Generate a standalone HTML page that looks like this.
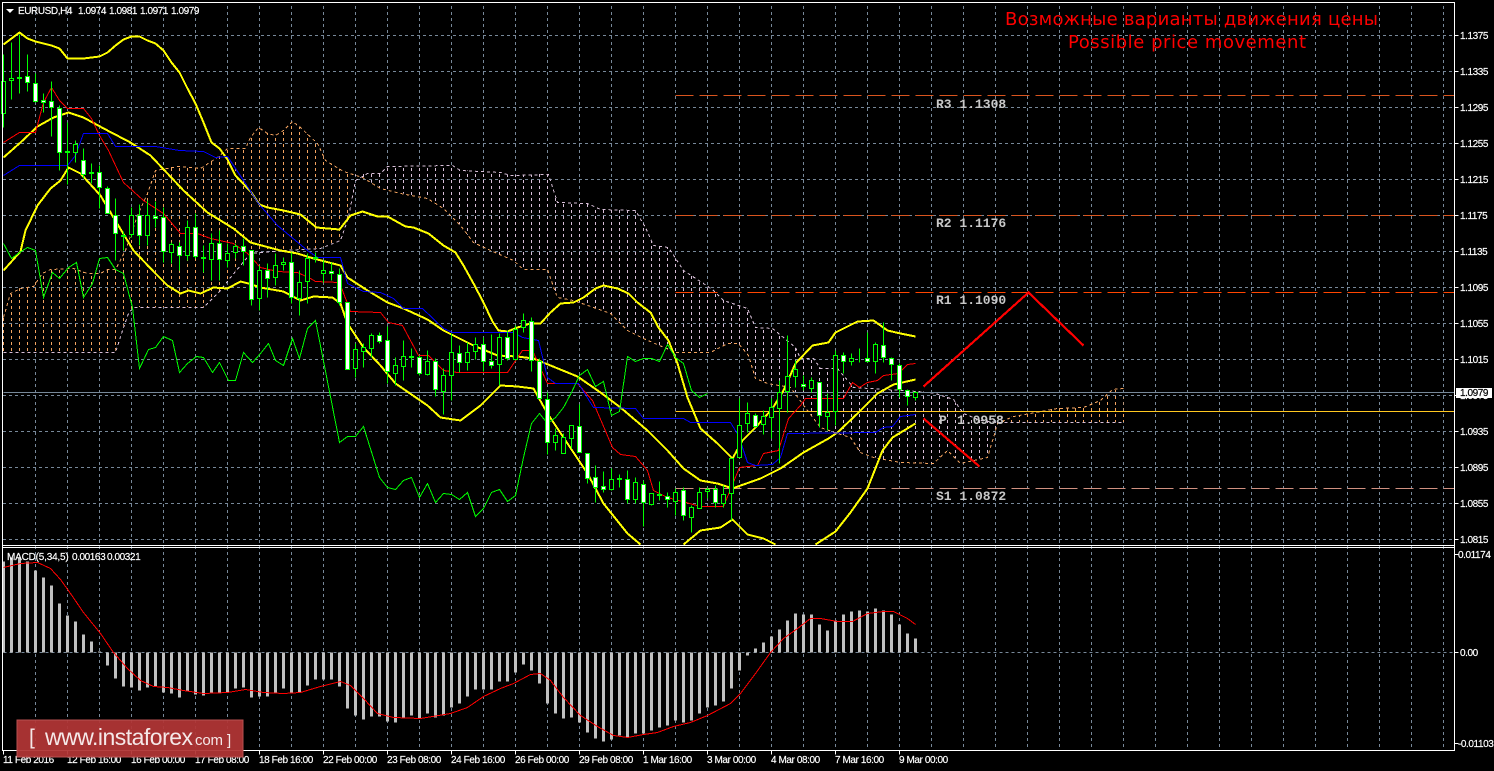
<!DOCTYPE html>
<html><head><meta charset="utf-8"><title>EURUSD H4</title>
<style>
html,body{margin:0;padding:0;background:#000;width:1494px;height:771px;overflow:hidden}
svg{display:block}
text{font-family:"Liberation Sans",sans-serif;font-size:10px;letter-spacing:-.42px;fill:#fff;stroke:#fff;stroke-width:.18px}
.p{font-family:"Liberation Mono",monospace;font-weight:bold;font-size:13px;letter-spacing:0;fill:#c8c8c8;stroke:none}
.t{font-family:"DejaVu Sans","Liberation Sans",sans-serif;font-size:18px;letter-spacing:0;fill:#f00;stroke:none}
.b{letter-spacing:0;fill:#f5e8e8;stroke:none}
.l{fill:none;shape-rendering:crispEdges}
</style></head><body>
<svg width="1494" height="771" viewBox="0 0 1494 771" xmlns="http://www.w3.org/2000/svg">
<defs>
<pattern id="gv" x="3" y="0" width="32" height="6" patternUnits="userSpaceOnUse"><rect width="1" height="3" fill="#778899" shape-rendering="crispEdges"/></pattern>
<pattern id="gh" x="3" y="35" width="6" height="36" patternUnits="userSpaceOnUse"><rect width="3" height="1" fill="#778899" shape-rendering="crispEdges"/></pattern>
<pattern id="co" x="3" y="0" width="8" height="6" patternUnits="userSpaceOnUse"><rect width="1" height="3" fill="#F4A460" shape-rendering="crispEdges"/></pattern>
<pattern id="ct" x="3" y="0" width="8" height="6" patternUnits="userSpaceOnUse"><rect width="1" height="3" fill="#D8BFD8" shape-rendering="crispEdges"/></pattern>
</defs>
<rect width="1494" height="771" fill="#000"/>
<rect x="4" y="3" width="1450" height="747" fill="url(#gv)" shape-rendering="crispEdges"/>
<rect x="3" y="3" width="1451" height="542" fill="url(#gh)" shape-rendering="crispEdges"/>
<polygon fill="url(#co)" shape-rendering="crispEdges" points="3,317 10,293 20,288 33,286 42,273 50,269 73,268 87,273 100,273 107,269 115,269 125,250 137,215 147,193 155,170 178,166 200,168 217,157 227,148 245,148 250,137 258,127 267,133 275,135 283,130 292,121 300,127 317,143 325,160 343,171 352,175 355,180 348,217 340,240 320,248 283,250 250,253 230,277 220,290 203,307 133,307 128,313 122,330 115,352 3,352"/>
<polygon fill="url(#ct)" shape-rendering="crispEdges" points="347,175 380,173 387,166 452,165 460,170 500,172 510,175 548,174 557,202 587,203 600,209 635,210 645,227 653,245 668,247 683,270 703,283 713,290 723,300 747,308 755,327 772,328 795,347 800,358 813,358 820,368 837,368 853,387 917,391 935,393 953,399 963,413 980,420 1000,422 997,423 993,437 987,457 960,463 947,450 933,463 900,462 873,457 860,452 850,437 837,433 820,427 807,410 790,387 767,383 755,378 748,355 738,343 727,343 710,352 675,352 643,338 627,330 610,313 593,307 573,300 557,297 555,292 547,269 523,269 513,260 490,250 473,242 460,225 443,208 427,198 400,193 380,188 362,177"/>
<polygon fill="url(#co)" shape-rendering="crispEdges" points="1000,422 1013,416 1057,408 1083,407 1100,400 1112,389 1123,388 1124,422"/>
<g transform="translate(.5 .5)">
<path class="l" stroke="#778899" stroke-dasharray="3 3" d="M3 652H1454"/>
<path class="l" stroke="#F4A460" stroke-dasharray="3 3" d="M3 317L10 293 20 288 33 286 42 273 50 269 73 268 87 273 100 273 107 269 115 269 125 250 137 215 147 193 155 170 178 166 200 168 217 157 227 148 245 148 250 137 258 127 267 133 275 135 283 130 292 121 300 127 317 143 325 160 343 171 362 177 380 188 400 193 427 198 443 208 460 225 473 242 490 250 513 260 523 269 547 269 555 292 557 297 573 300 593 307 610 313 627 330 643 338 675 352 710 352 727 343 738 343 748 355 755 378 767 383 790 387 807 410 820 427 837 433 850 437 860 452 873 457 900 462 933 463 947 450 960 463 987 457 993 437 997 423 1013 416 1057 408 1083 407 1100 400 1112 389 1123 388"/>
<path class="l" stroke="#D8BFD8" stroke-dasharray="3 3" d="M3 352H115L122 330 128 313 133 307H203L220 290 230 277 250 253 283 250 320 248 340 240 348 217 355 180 367 173 380 173 387 166 452 165 460 170 500 172 510 175 548 174 557 202 587 203 600 209 635 210 645 227 653 245 668 247 683 270 703 283 713 290 723 300 747 308 755 327 772 328 795 347 800 358 813 358 820 368 837 368 853 387 917 391 935 393 953 399 963 413 980 420 1000 422H1123"/>
<path class="l" stroke="#778899" d="M3 392H1454"/>
<path class="l" stroke="#FFC820" d="M675 411H1454"/>
<path class="l" stroke="#FF4500" stroke-dasharray="18 6" d="M675 292H1454"/>
<path class="l" stroke="#D9541E" stroke-dasharray="18 6" d="M675 95H1454M675 215H1454"/>
<path class="l" stroke="#D09080" stroke-dasharray="18 6" d="M675 488H1454"/>
<path class="l" stroke="#FFFF00" stroke-width="2" d="M3 44L19 32 27 38 35 41 51 45 59 48 67 58 83 58 99 56 107 52 115 45 123 39 131 36 139 36 147 40 155 43 163 50 171 62 179 72 187 88 195 103 203 122 211 142 219 148 227 159 235 175 251 192 259 204 267 207 283 210 300 214 316 227 339 229 350 215 362 211 377 216 387 216 405 226 413 227 428 233 443 245 455 252 463 265 473 283 483 302 492 321 498 330 507 331 517 327 530 323 540 323 550 312 560 303 573 302 583 297 595 288 603 285 617 288 628 293 637 302 650 312 658 327 668 340 677 363 687 397 700 428 717 443 732 458 742 440 755 427 772 408 783 390 795 363 812 345 828 342 835 332 857 321 873 320 887 330 900 333 915 336"/>
<path class="l" stroke="#FFFF00" stroke-width="2" d="M3 157L20 142 37 126 53 117 68 112 83 117 107 130 130 142 150 155 167 173 183 190 207 212 233 228 250 242 280 250 297 253 313 258 340 265 347 277 367 290 387 302 403 308 427 319 443 330 473 345 497 355 517 356 533 358 550 365 577 376 600 392 620 407 647 430 667 450 683 468 700 480 717 483 732 488 743 484 760 478 780 468 803 452 828 438 837 432 857 413 877 393 893 384 915 379"/>
<path class="l" stroke="#FFFF00" stroke-width="2" d="M3 270L20 251 25 230 37 205 50 188 60 180 68 167 80 173 100 195 113 217 133 250 155 273 167 285 180 293 188 290 200 293 213 287 227 288 240 281 248 283 260 287 283 291 300 300 313 296 332 297 340 303 347 323 363 347 380 365 395 383 427 405 440 417 460 420 480 405 500 385 517 386 533 388 547 413 567 443 587 473 603 503 627 533 640 544M683 544L700 530 720 527 732 519 747 534 763 538 775 544M815 544L835 531 850 512 867 488 882 450 892 437 915 423"/>
<path class="l" stroke="#FF0000" d="M3 142L19 132 35 132 43 102 51 87 59 100 67 108 83 108 91 118 99 135 108 150 123 182 143 200 163 213 180 233 197 233 210 238 233 243 247 253 260 267 277 271 297 272 310 278 315 281 339 282 350 311 380 312 388 322 402 325 418 355 428 355 443 370 457 372 507 372 522 350 532 350 547 383 577 383 592 400 612 447 620 454 635 456 647 470 653 490 667 497 700 506 723 506 739 467 757 465 763 453 778 450 788 418 800 405 805 398 843 398 852 382 859 387 867 382 877 380 883 375 898 373 907 364 915 363"/>
<path class="l" stroke="#0000FF" d="M3 175L19 165 67 165 75 155 83 133 107 133 115 146 155 146 179 150 203 151 215 157 227 156 243 180 258 203 277 225 307 250 317 257 340 257 347 283 363 291 380 292 393 298 403 308 422 308 443 328 452 332 513 332 522 337 538 340 547 377 555 383 578 383 593 407 635 408 643 418 683 418 690 422 730 422 738 435 747 462 755 465 772 464 780 457 787 433 875 432 883 427 892 426 900 416 915 414"/>
<path class="l" stroke="#00FF00" d="M3 243L11 258 19 252 27 247 35 250 43 297 52 272 59 278 68 267 76 262 83 297 92 283 99 258 107 257 115 269 123 273 132 307 139 368 148 349 155 347 163 336 172 340 179 372 187 363 196 356 203 357 212 372 219 362 228 380 235 380 243 352 252 362 260 353 268 343 275 360 283 365 292 338 299 358 307 328 315 320 339 442 347 436 355 436 363 426 379 477 387 487 395 489 403 480 411 477 419 497 427 483 435 502 443 493 451 494 459 499 467 492 475 516 483 508 491 492 499 489 507 501 515 495 523 457 531 423 539 413 547 423 555 417 563 407 571 392 579 375 587 369 595 386 603 381 611 415 619 411 627 356 635 361 643 358 651 358 659 361 667 344 675 357 683 363 691 390 699 397 707 393"/>
<path class="l" stroke="#00FF00" d="M3 54V127M11 42V99M19 34V93M27 54V91M35 73V102M43 93V112M51 81V136M59 105V170M67 122V184M75 140V162M83 148V178M91 163V183M99 165V208M107 186V213M115 198V260M123 231V250M131 207V237M139 204V245M147 200V245M155 201V227M163 207V262M171 242V263M179 242V270M187 220V260M195 213V258M203 245V272M211 233V280M219 230V280M227 243V267M235 243V258M243 238V265M251 250V305M259 265V310M267 263V297M275 253V285M283 257V270M291 252V303M299 270V315M307 253V303M315 252V262M323 260V282M331 262V280M339 268V305M347 302V369M355 343V377M363 343V367M371 333V357M379 332V343M387 326V383M395 357V385M403 340V380M411 348V367M419 355V375M427 350V375M435 358V396M443 368V414M451 333V400M459 345V372M467 342V370M475 337V359M483 337V371M491 334V368M499 333V385M507 330V360M515 325V360M523 313V332M531 317V371M539 358V398M547 392V454M555 428V450M563 433V453M571 425V448M579 404V452M587 453V483M595 465V502M603 471V492M611 468V490M619 474V487M627 470V503M635 477V503M643 480V526M651 493V505M659 481V500M667 492V507M675 488V515M683 487V520M691 505V532M699 487V508M707 487V498M715 485V507M723 485V507M731 458V520M739 398V457M747 402V432M755 413V427M763 410V434M771 398V438M779 380V463M787 335V412M795 360V387M803 375V390M811 377V392M819 382V427M827 393V430M835 350V425M843 352V373M851 353V365M859 348V362M867 332V362M875 342V373M883 322V362M891 357V380M899 363V397M907 389V405M915 391V400M17 77h4v1h-4zM65 151h4v1h-4zM89 172h4v1h-4zM121 235h4v1h-4zM201 257h4v1h-4zM313 257h4v1h-4zM409 356h4v1h-4zM617 478h4v1h-4zM657 494h4v1h-4z"/>
<path shape-rendering="crispEdges" fill="#000" stroke="#00FF00" d="M1 81h4V113h-4zM9 78h4V80h-4zM73 144h4V152h-4zM129 215h4V234h-4zM145 215h4V235h-4zM169 244h4V252h-4zM185 227h4V255h-4zM209 243h4V259h-4zM225 253h4V260h-4zM233 246h4V252h-4zM257 270h4V298h-4zM273 265h4V277h-4zM281 262h4V264h-4zM297 282h4V298h-4zM305 258h4V281h-4zM321 270h4V273h-4zM353 349h4V368h-4zM361 347h4V351h-4zM369 335h4V348h-4zM393 365h4V373h-4zM401 356h4V366h-4zM425 361h4V374h-4zM441 375h4V391h-4zM449 352h4V375h-4zM465 352h4V362h-4zM473 344h4V351h-4zM497 337h4V364h-4zM513 329h4V359h-4zM521 320h4V327h-4zM553 435h4V442h-4zM561 437h4V453h-4zM569 425h4V438h-4zM609 479h4V489h-4zM633 482h4V499h-4zM649 493h4V504h-4zM673 492h4V501h-4zM689 507h4V517h-4zM697 492h4V508h-4zM705 489h4V491h-4zM721 494h4V503h-4zM729 458h4V493h-4zM737 425h4V457h-4zM745 413h4V423h-4zM761 416h4V424h-4zM769 407h4V417h-4zM777 392h4V408h-4zM785 376h4V391h-4zM793 369h4V376h-4zM809 380h4V388h-4zM825 412h4V416h-4zM833 355h4V411h-4zM849 358h4V361h-4zM873 344h4V361h-4zM913 392h4V397h-4z"/>
<path shape-rendering="crispEdges" fill="#fff" stroke="#00FF00" d="M25 76h4V82h-4zM33 83h4V101h-4zM41 100h4V102h-4zM49 101h4V107h-4zM57 108h4V152h-4zM81 160h4V174h-4zM97 172h4V187h-4zM105 188h4V213h-4zM113 215h4V233h-4zM137 215h4V235h-4zM153 216h4V218h-4zM161 217h4V251h-4zM177 246h4V255h-4zM193 227h4V256h-4zM217 243h4V259h-4zM241 246h4V251h-4zM249 250h4V299h-4zM265 270h4V278h-4zM289 262h4V297h-4zM329 271h4V273h-4zM337 274h4V302h-4zM345 302h4V369h-4zM377 335h4V341h-4zM385 340h4V371h-4zM417 357h4V373h-4zM433 361h4V389h-4zM457 353h4V362h-4zM481 344h4V361h-4zM489 361h4V365h-4zM505 337h4V358h-4zM529 321h4V360h-4zM537 361h4V398h-4zM545 399h4V442h-4zM577 426h4V452h-4zM585 453h4V478h-4zM593 477h4V487h-4zM601 486h4V489h-4zM625 479h4V499h-4zM641 484h4V502h-4zM665 496h4V499h-4zM681 490h4V515h-4zM713 489h4V502h-4zM753 415h4V426h-4zM801 384h4V386h-4zM817 382h4V415h-4zM841 355h4V361h-4zM865 358h4V361h-4zM881 345h4V357h-4zM889 358h4V364h-4zM897 365h4V389h-4zM905 390h4V396h-4z"/>
<path class="l" stroke="#C0C0C0" stroke-width="3" d="M3 652V561M11 652V557M19 652V557M27 652V561M35 652V570M43 652V577M51 652V585M59 652V603M67 652V615M75 652V621M83 652V634M91 652V641M99 652V651M107 652V665M115 652V678M123 652V686M131 652V687M139 652V690M147 652V687M155 652V686M163 652V692M171 652V693M179 652V697M187 652V691M195 652V694M203 652V695M211 652V692M219 652V692M227 652V692M235 652V688M243 652V687M251 652V697M259 652V696M267 652V696M275 652V692M283 652V688M291 652V693M299 652V692M307 652V685M315 652V679M323 652V679M331 652V679M339 652V686M347 652V708M355 652V715M363 652V719M371 652V716M379 652V716M387 652V721M395 652V722M403 652V717M411 652V715M419 652V718M427 652V713M435 652V717M443 652V715M451 652V707M459 652V703M467 652V696M475 652V689M483 652V689M491 652V689M499 652V681M507 652V681M515 652V672M523 652V664M531 652V670M539 652V683M547 652V703M555 652V713M563 652V718M571 652V717M579 652V722M587 652V732M595 652V738M603 652V741M611 652V739M619 652V735M627 652V737M635 652V733M643 652V733M651 652V730M659 652V727M667 652V725M675 652V720M683 652V722M691 652V720M699 652V713M707 652V707M715 652V705M723 652V701M731 652V688M739 652V670M747 652V655M755 652V648M763 652V642M771 652V636M779 652V629M787 652V620M795 652V613M803 652V614M811 652V614M819 652V624M827 652V630M835 652V620M843 652V614M851 652V611M859 652V610M867 652V611M875 652V608M883 652V610M891 652V614M899 652V624M907 652V633M915 652V638"/>
<path class="l" stroke="#FF0000" d="M3 567L20 563 37 562 50 568 60 579 70 593 83 612 100 633 113 652 127 668 140 680 153 686 167 687 183 690 203 693 227 692 245 689 263 692 283 693 300 692 320 686 340 681 350 685 363 698 377 713 393 717 420 718 450 713 467 707 483 696 500 688 513 683 530 674 540 673 550 680 563 697 580 715 597 726 613 735 627 737 643 734 657 732 673 726 690 722 707 715 730 703 740 693 755 673 770 652 783 638 797 628 810 618 820 618 837 621 852 621 867 613 883 611 893 611 907 618 915 624"/>
<path class="l" stroke="#FF0000" stroke-width="2.2" d="M923 386L1028 292 1083 345M923 418L979 466"/>
<path class="l" stroke="#fff" d="M2 2H1454V750H2ZM2 545H1454M2 547H1454"/>
<path class="l" stroke="#fff" d="M1454 35h4M1454 71h4M1454 107h4M1454 143h4M1454 179h4M1454 215h4M1454 251h4M1454 287h4M1454 323h4M1454 359h4M1454 395h4M1454 431h4M1454 467h4M1454 503h4M1454 539h4M1454 554h4M1454 652h4M1454 743h4M3 750v4M67 750v4M131 750v4M195 750v4M259 750v4M323 750v4M387 750v4M451 750v4M515 750v4M579 750v4M643 750v4M707 750v4M771 750v4M835 750v4M899 750v4"/>
</g>
<polygon points="6,9 14,9 10,13" fill="#fff"/>
<text x="18" y="14">EURUSD,H4</text><text x="78" y="14">1.0974</text><text x="109" y="14">1.0981</text><text x="140" y="14">1.0971</text><text x="171" y="14">1.0979</text>
<text x="7" y="560" style="letter-spacing:-.2px">MACD(5,34,5)</text><text x="72" y="560">0.00163</text><text x="107" y="560">0.00321</text>
<text class="t" x="1005" y="25" textLength="373" lengthAdjust="spacing">Возможные варианты движения цены</text>
<text class="t" x="1068" y="48" textLength="238" lengthAdjust="spacing">Possible price movement</text>
<text class="p" x="936" y="108">R3 1.1308</text><text class="p" x="936" y="227">R2 1.1176</text><text class="p" x="936" y="304">R1 1.1090</text><text class="p" x="939" y="424">P</text><text class="p" x="957" y="424">1.0958</text><text class="p" x="936" y="500">S1 1.0872</text>
<g>
<text x="1460" y="39">1.1375</text><text x="1460" y="75">1.1335</text><text x="1460" y="111">1.1295</text><text x="1460" y="147">1.1255</text><text x="1460" y="183">1.1215</text><text x="1460" y="219">1.1175</text><text x="1460" y="255">1.1135</text><text x="1460" y="291">1.1095</text><text x="1460" y="327">1.1055</text><text x="1460" y="363">1.1015</text><text x="1460" y="399">1.0975</text><text x="1460" y="435">1.0935</text><text x="1460" y="471">1.0895</text><text x="1460" y="507">1.0855</text><text x="1460" y="543">1.0815</text>
<rect x="1456" y="388" width="36" height="10" fill="#fff"/><text x="1460" y="396" style="fill:#000;stroke:#000">1.0979</text>
<text x="1458" y="558">0.01174</text><text x="1460" y="656">0.00</text><text x="1458" y="747">-0.01103</text>
</g>
<g>
<text x="3" y="763">11 Feb 2016</text><text x="67" y="763">12 Feb 16:00</text><text x="131" y="763">16 Feb 00:00</text><text x="195" y="763">17 Feb 08:00</text><text x="259" y="763">18 Feb 16:00</text><text x="323" y="763">22 Feb 00:00</text><text x="387" y="763">23 Feb 08:00</text><text x="451" y="763">24 Feb 16:00</text><text x="515" y="763">26 Feb 00:00</text><text x="579" y="763">29 Feb 08:00</text><text x="643" y="763">1 Mar 16:00</text><text x="707" y="763">3 Mar 00:00</text><text x="771" y="763">4 Mar 08:00</text><text x="835" y="763">7 Mar 16:00</text><text x="899" y="763">9 Mar 00:00</text>
</g>
<rect x="17" y="720" width="226" height="37" fill="#B03535" fill-opacity=".94" stroke="#B85050" stroke-width="1" shape-rendering="crispEdges"/>
<text class="b" x="29" y="744" style="font-size:21px">[</text>
<text class="b" x="45" y="745" textLength="148" lengthAdjust="spacing" style="font-size:23px">www.instaforex</text>
<text class="b" x="195" y="745" textLength="28" lengthAdjust="spacing" style="font-size:15px">com</text>
<text class="b" x="227" y="745" style="font-size:15px">]</text>
</svg>
</body></html>
